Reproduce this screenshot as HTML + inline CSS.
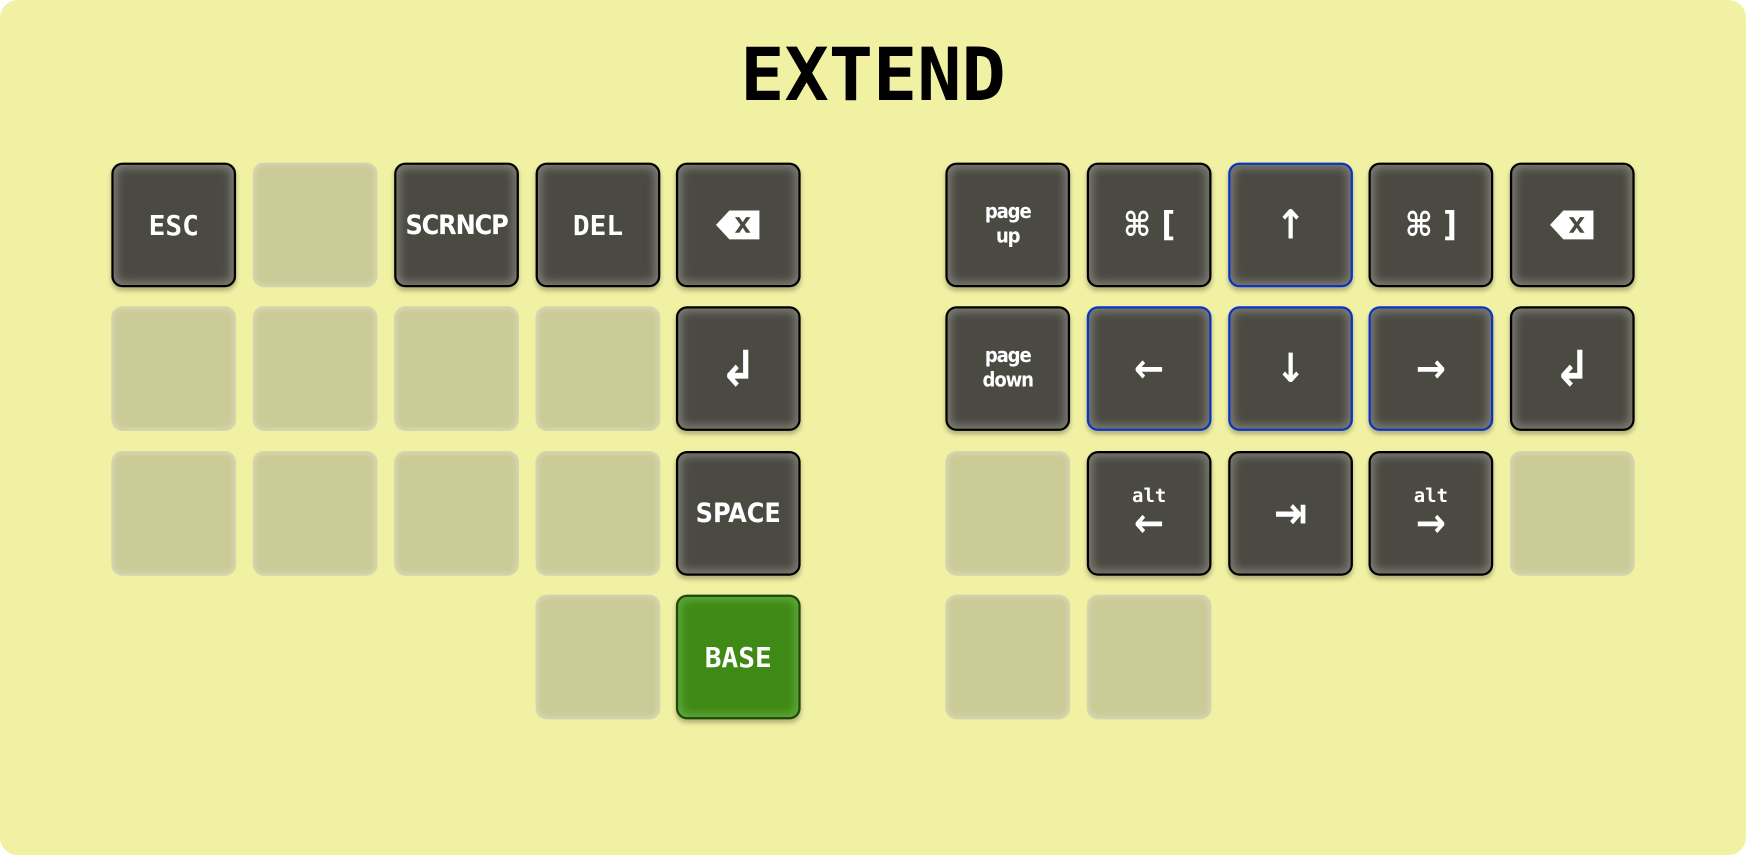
<!DOCTYPE html>
<html><head><style>
html,body{margin:0;padding:0;width:1746px;height:855px;overflow:hidden;background:#fff;}
#w{position:absolute;left:0;top:0;width:1568px;height:768px;transform:scale(1.11352);transform-origin:0 0;}
#bg{position:absolute;left:0;top:0;width:1568px;height:768px;background:#f1f1a4;border-radius:16px;}
h1{position:absolute;left:0;width:1568px;top:29px;margin:0;text-align:center;font:bold 66px "DejaVu Sans Mono","Liberation Mono",monospace;color:#000;}
.k{position:absolute;width:108px;height:108px;border-radius:10px;box-sizing:content-box;}
.d{background:#4a4a42;border:2px solid #000;box-shadow:inset 0 0 8px 3px rgba(170,170,160,0.55),0 3px 4px rgba(0,0,0,0.25);color:#fff;display:flex;align-items:center;justify-content:center;text-align:center;font:bold 24px "DejaVu Sans Condensed","DejaVu Sans",sans-serif;}
.b{border-color:#0a34c8;}
.g{background:#3f8a15;border-color:#1f4a0a;box-shadow:inset 0 0 8px 3px rgba(120,190,90,0.6),0 3px 4px rgba(0,0,0,0.25);}
.e{background:#cbcb98;box-shadow:inset 0 0 5px 2px rgba(220,220,190,0.8);width:112px;height:112px;}
.m{font-family:"DejaVu Sans Mono",monospace;font-size:25px;}
.s{font-size:18px;line-height:22px;letter-spacing:-1px;}
.t{font-size:17px;line-height:24px;}
.t small{font:bold 17px "DejaVu Sans Mono",monospace;display:block;}
.t span{font-size:36px;display:block;line-height:30px;}
.a{font-size:36px;}
</style></head><body><div id="w"><div id="bg"></div>
<h1>EXTEND</h1>
<div class="k d m" style="left:100px;top:146px">ESC</div>
<div class="k e" style="left:227px;top:146px"></div>
<div class="k d" style="left:354px;top:146px;letter-spacing:-1px">SCRNCP</div>
<div class="k d m" style="left:481px;top:146px">DEL</div>
<div class="k d" style="left:607px;top:146px"><svg width="40" height="28" viewBox="0 0 40 28"><path fill="#fff" fill-rule="evenodd" d="M0 14L12 1H39V27H12Z M17 7L22 14L17 21H21L24 16.5L27 21H31L26 14L31 7H27L24 11.5L21 7Z"/></svg></div>
<div class="k e" style="left:100px;top:275px"></div>
<div class="k e" style="left:227px;top:275px"></div>
<div class="k e" style="left:354px;top:275px"></div>
<div class="k e" style="left:481px;top:275px"></div>
<div class="k d a" style="left:607px;top:275px;font-size:44px">↲</div>
<div class="k e" style="left:100px;top:405px"></div>
<div class="k e" style="left:227px;top:405px"></div>
<div class="k e" style="left:354px;top:405px"></div>
<div class="k e" style="left:481px;top:405px"></div>
<div class="k d" style="left:607px;top:405px">SPACE</div>
<div class="k e" style="left:481px;top:534px"></div>
<div class="k d g m" style="left:607px;top:534px">BASE</div>
<div class="k d s" style="left:849px;top:146px">page<br>up</div>
<div class="k d" style="left:976px;top:146px;font-size:30px">⌘ [</div>
<div class="k d b a" style="left:1103px;top:146px">↑</div>
<div class="k d" style="left:1229px;top:146px;font-size:30px">⌘ ]</div>
<div class="k d" style="left:1356px;top:146px"><svg width="40" height="28" viewBox="0 0 40 28"><path fill="#fff" fill-rule="evenodd" d="M0 14L12 1H39V27H12Z M17 7L22 14L17 21H21L24 16.5L27 21H31L26 14L31 7H27L24 11.5L21 7Z"/></svg></div>
<div class="k d s" style="left:849px;top:275px">page<br>down</div>
<div class="k d b a" style="left:976px;top:275px">←</div>
<div class="k d b a" style="left:1103px;top:275px">↓</div>
<div class="k d b a" style="left:1229px;top:275px">→</div>
<div class="k d a" style="left:1356px;top:275px;font-size:44px">↲</div>
<div class="k e" style="left:849px;top:405px"></div>
<div class="k d t" style="left:976px;top:405px"><div><small>alt</small><span>←</span></div></div>
<div class="k d a" style="left:1103px;top:405px;font-size:40px">⇥</div>
<div class="k d t" style="left:1229px;top:405px"><div><small>alt</small><span>→</span></div></div>
<div class="k e" style="left:1356px;top:405px"></div>
<div class="k e" style="left:849px;top:534px"></div>
<div class="k e" style="left:976px;top:534px"></div>
</div></body></html>
